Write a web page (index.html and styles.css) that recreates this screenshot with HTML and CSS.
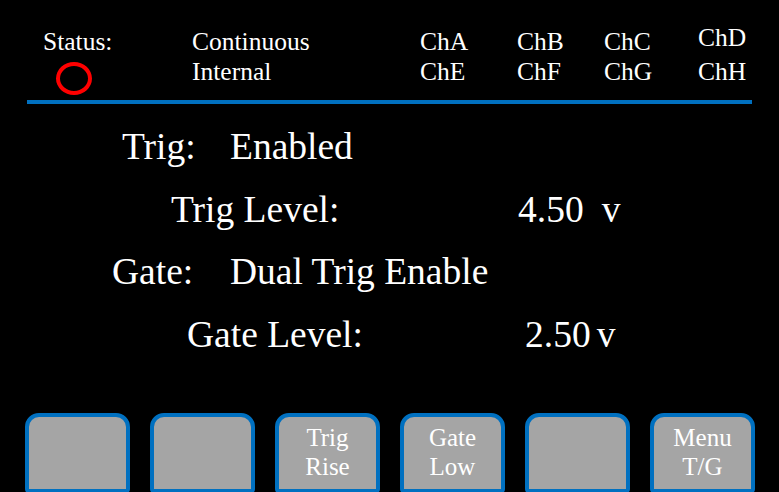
FILE: index.html
```html
<!DOCTYPE html>
<html lang="en">
<head>
    <meta charset="UTF-8">
    <meta name="viewport" content="width=device-width, initial-scale=1.0">
    <title>Trigger / Gate Setup</title>
    <link rel="stylesheet" href="styles.css">
</head>
<body>

    <div class="screen">
        <div class="status-bar">
            <div class="cell">Status:</div>
            <div class="cell">Continuous</div>
            <div class="cell">ChA</div>
            <div class="cell">ChB</div>
            <div class="cell">ChC</div>
            <div class="cell raised">ChD</div>

            <div class="cell"><span class="status-light"></span></div>
            <div class="cell">Internal</div>
            <div class="cell">ChE</div>
            <div class="cell">ChF</div>
            <div class="cell">ChG</div>
            <div class="cell">ChH</div>
        </div>
        <div class="rule"></div>

        <div class="settings">
            <div class="row row-trig">
                <span class="label">Trig:</span>
                <span class="value">Enabled</span>
            </div>
            <div class="row row-trig-level">
                <span class="label">Trig Level:</span>
                <span class="value">4.50<span class="unit wide">v</span></span>
            </div>
            <div class="row row-gate">
                <span class="label">Gate:</span>
                <span class="value">Dual Trig Enable</span>
            </div>
            <div class="row row-gate-level">
                <span class="label">Gate Level:</span>
                <span class="value">2.50<span class="unit">v</span></span>
            </div>
        </div>

        <div class="softkeys">
            <button class="softkey"></button>
            <button class="softkey"></button>
            <button class="softkey">Trig<br>Rise</button>
            <button class="softkey">Gate<br>Low</button>
            <button class="softkey"></button>
            <button class="softkey">Menu<br>T/G</button>
        </div>
    </div>

</body>
</html>
```

FILE: styles.css
```css
body {
    margin: 0;
    padding: 0;
    background-color: #000;
    font-family: "Liberation Serif", "Times New Roman", serif;
    color: #fff;
    overflow: hidden;
}
.screen {
    width: 779px;
    height: 492px;
    overflow: hidden;
}

/* top status bar */
.status-bar {
    box-sizing: border-box;
    height: 100px;
    padding: 27px 0 0 43px;
    display: grid;
    grid-template-columns: 149px 228px 97px 87px 94px auto;
    grid-template-rows: 30px 30px;
    align-items: start;
    font-size: 25.5px;
    line-height: 30px;
}
.cell.raised {
    margin-top: -4px;
}
.status-light {
    display: block;
    box-sizing: border-box;
    width: 36px;
    height: 33px;
    margin: 5px 0 0 13px;
    border: 4px solid #ff0000;
    border-radius: 50%;
}
.rule {
    height: 4px;
    margin: 0 27px;
    background-color: #0070c0;
}

/* trigger / gate settings */
.settings {
    padding-top: 12px;
    font-size: 37.5px;
    line-height: 62.5px;
}
.row {
    display: flex;
    white-space: nowrap;
}
.row-trig { padding-left: 122px; }
.row-trig .label { width: 108px; }
.row-trig-level { padding-left: 171px; }
.row-trig-level .label { width: 347px; }
.row-gate { padding-left: 112px; }
.row-gate .label { width: 118px; }
.row-gate-level { padding-left: 187px; }
.row-gate-level .label { width: 338px; }
.unit {
    margin-left: 6px;
}
.unit.wide {
    margin-left: 18px;
}

/* soft keys along the bottom */
.softkeys {
    display: flex;
    gap: 20px;
    margin-top: 47px;
    padding-left: 25px;
}
.softkey {
    box-sizing: border-box;
    width: 105px;
    height: 80px;
    padding: 6px 0 0;
    border: 4px solid #0070c0;
    border-radius: 14px 14px 4px 4px;
    background-color: #a5a5a5;
    color: #fff;
    font-family: "Liberation Serif", "Times New Roman", serif;
    font-size: 25px;
    line-height: 29px;
    text-align: center;
    display: flex;
    flex-direction: column;
    align-items: center;
    justify-content: flex-start;
}
```
